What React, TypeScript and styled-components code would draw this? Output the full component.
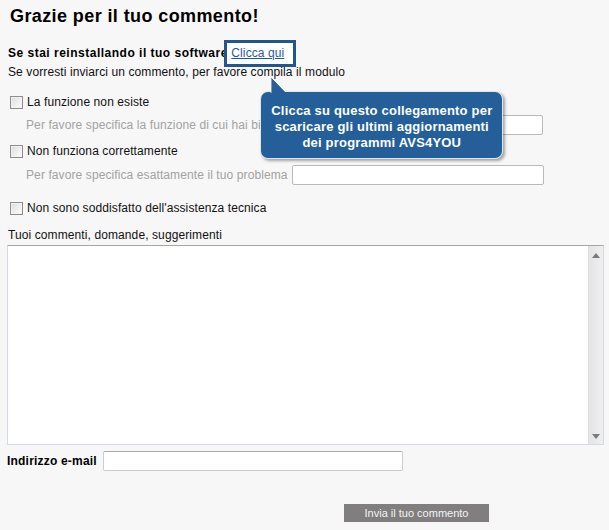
import React from "react";
import styled, { createGlobalStyle } from "styled-components";

const GlobalStyle = createGlobalStyle`
  html, body {
    margin: 0;
    padding: 0;
    background: #f7f7f7;
  }
  body {
    font-family: "Liberation Sans", Arial, sans-serif;
    font-size: 12px;
    letter-spacing: 0.1px;
    color: #111;
  }
`;

export default function App() {
  return (
    <>
      <GlobalStyle />
      <Page>
        <Title>Grazie per il tuo commento!</Title>

        <Intro>
          <Line>
            <Strong $spacing={0.5}>Se stai reinstallando il tuo software</Strong>{" "}
            <LinkWrap>
              <Highlight />
              <Link href="#">Clicca qui</Link>
              <Tooltip>
                <Tail width="26" height="17" viewBox="0 0 26 17">
                  <polygon points="10,1 10,17 25,17" fill="#245f99" />
                  <polyline
                    points="10,17 10,1 25,16"
                    fill="none"
                    stroke="#ffffff"
                    strokeOpacity="0.8"
                    strokeWidth="1"
                  />
                </Tail>
                Clicca su questo collegamento per scaricare gli ultimi
                aggiornamenti dei programmi AVS4YOU
              </Tooltip>
            </LinkWrap>
          </Line>
          <Line>Se vorresti inviarci un commento, per favore compila il modulo</Line>
        </Intro>

        <CheckRow $top={10}>
          <Check type="checkbox" />
          <span>La funzione non esiste</span>
        </CheckRow>
        <SubRow $top={3}>
          <Hint>Per favore specifica la funzione di cui hai bisogno</Hint>
          <Field $width={245} />
        </SubRow>

        <CheckRow $top={6}>
          <Check type="checkbox" />
          <span>Non funziona correttamente</span>
        </CheckRow>
        <SubRow $top={4}>
          <Hint>Per favore specifica esattamente il tuo problema</Hint>
          <Field $width={252} />
        </SubRow>

        <CheckRow $top={13}>
          <Check type="checkbox" />
          <span>Non sono soddisfatto dell'assistenza tecnica</span>
        </CheckRow>

        <CommentLabel>Tuoi commenti, domande, suggerimenti</CommentLabel>
        <CommentBox>
          <Comment />
          <ScrollBar>
            <svg width="8" height="5" viewBox="0 0 8 5">
              <polygon points="4,0 8,5 0,5" fill="#7a7a7a" />
            </svg>
            <svg width="8" height="5" viewBox="0 0 8 5">
              <polygon points="0,0 8,0 4,5" fill="#7a7a7a" />
            </svg>
          </ScrollBar>
        </CommentBox>

        <EmailRow>
          <Strong $spacing={0.2}>Indirizzo e-mail</Strong>
          <EmailField />
        </EmailRow>

        <SendButton type="button">Invia il tuo commento</SendButton>
      </Page>
    </>
  );
}

const Page = styled.div`
  width: 609px;
  height: 530px;
  box-sizing: border-box;
  display: flex;
  flex-direction: column;
  align-items: flex-start;
  overflow: hidden;
`;

const Title = styled.h1`
  margin: 0;
  padding: 6px 10px 0;
  font-size: 18px;
  line-height: 20px;
  font-weight: bold;
  letter-spacing: 0.4px;
  color: #000;
`;

const Intro = styled.div`
  margin-top: 18px;
  padding-left: 8px;
`;

const Line = styled.div`
  line-height: 19px;
  white-space: nowrap;
`;

const Strong = styled.strong<{ $spacing: number }>`
  font-weight: bold;
  letter-spacing: ${(p) => p.$spacing}px;
  color: #000;
`;

const LinkWrap = styled.span`
  position: relative;
  display: inline-block;
`;

const Highlight = styled.span`
  position: absolute;
  left: -7px;
  top: -4px;
  width: 66px;
  height: 21px;
  border: 3px solid #20578f;
  background: #fff;
`;

const Link = styled.a`
  position: relative;
  color: #1d5aa6;
  text-decoration: underline;
`;

const Tooltip = styled.div`
  position: absolute;
  left: 29px;
  top: 47px;
  width: 243px;
  height: 68px;
  box-sizing: border-box;
  padding: 11px 4px 0;
  background: #245f99;
  border: 1px solid rgba(255, 255, 255, 0.85);
  border-radius: 8px;
  box-shadow: 2px 2px 3px rgba(0, 0, 0, 0.35);
  color: #fff;
  font-size: 13px;
  font-weight: bold;
  letter-spacing: 0.2px;
  line-height: 16px;
  text-align: center;
  white-space: normal;
  z-index: 2;
`;

const Tail = styled.svg`
  position: absolute;
  left: 0;
  top: -16px;
`;

const CheckRow = styled.label<{ $top: number }>`
  margin-top: ${(p) => p.$top}px;
  height: 20px;
  display: flex;
  align-items: center;
  padding-left: 10px;
  gap: 4px;
  white-space: nowrap;
`;

const Check = styled.input`
  appearance: none;
  margin: 0;
  width: 13px;
  height: 13px;
  box-sizing: border-box;
  border: 1px solid #8e8e8e;
  background: linear-gradient(135deg, #dcdcdc 0%, #f4f4f4 70%, #fff 100%);
  box-shadow: inset 0 0 0 1px #f2f2f2;
`;

const SubRow = styled.div<{ $top: number }>`
  margin-top: ${(p) => p.$top}px;
  height: 20px;
  display: flex;
  align-items: center;
  padding-left: 26px;
  gap: 4px;
  white-space: nowrap;
`;

const Hint = styled.span`
  color: #a2a2a2;
`;

const Field = styled.input<{ $width: number }>`
  width: ${(p) => p.$width}px;
  height: 20px;
  box-sizing: border-box;
  margin: 0;
  border: 1px solid #b9b9b9;
  border-radius: 2px;
  background: #fff;
  font: inherit;
`;

const CommentLabel = styled.div`
  margin-top: 8px;
  padding-left: 8px;
  line-height: 18px;
`;

const CommentBox = styled.div`
  margin: 1px 0 0 7px;
  width: 597px;
  height: 200px;
  box-sizing: border-box;
  display: flex;
  border: 1px solid #d3dae3;
  border-top-color: #a6a6a6;
  background: #fff;
`;

const Comment = styled.textarea`
  flex: 1;
  border: none;
  outline: none;
  resize: none;
  margin: 0;
  padding: 2px;
  background: #fff;
  font: inherit;
`;

const ScrollBar = styled.div`
  width: 15px;
  display: flex;
  flex-direction: column;
  justify-content: space-between;
  align-items: center;
  padding: 7px 0 5px;
  box-sizing: border-box;
  background: linear-gradient(90deg, #e4e4e4, #efefef);
  border-left: 1px solid #dcdcdc;
`;

const EmailRow = styled.div`
  margin-top: 6px;
  height: 20px;
  display: flex;
  align-items: center;
  gap: 6px;
  padding-left: 7px;
  white-space: nowrap;
`;

const EmailField = styled.input`
  width: 300px;
  height: 20px;
  box-sizing: border-box;
  margin: 0;
  border: 1px solid #c8cdd4;
  border-top-color: #aaa;
  border-radius: 2px;
  background: #fff;
  font: inherit;
`;

const SendButton = styled.button`
  margin: 33px 0 0 344px;
  width: 145px;
  height: 18px;
  padding: 0;
  border: none;
  background: #807e7e;
  color: #f4f4f4;
  font-family: "Liberation Sans", Arial, sans-serif;
  font-size: 11px;
  cursor: pointer;
`;
